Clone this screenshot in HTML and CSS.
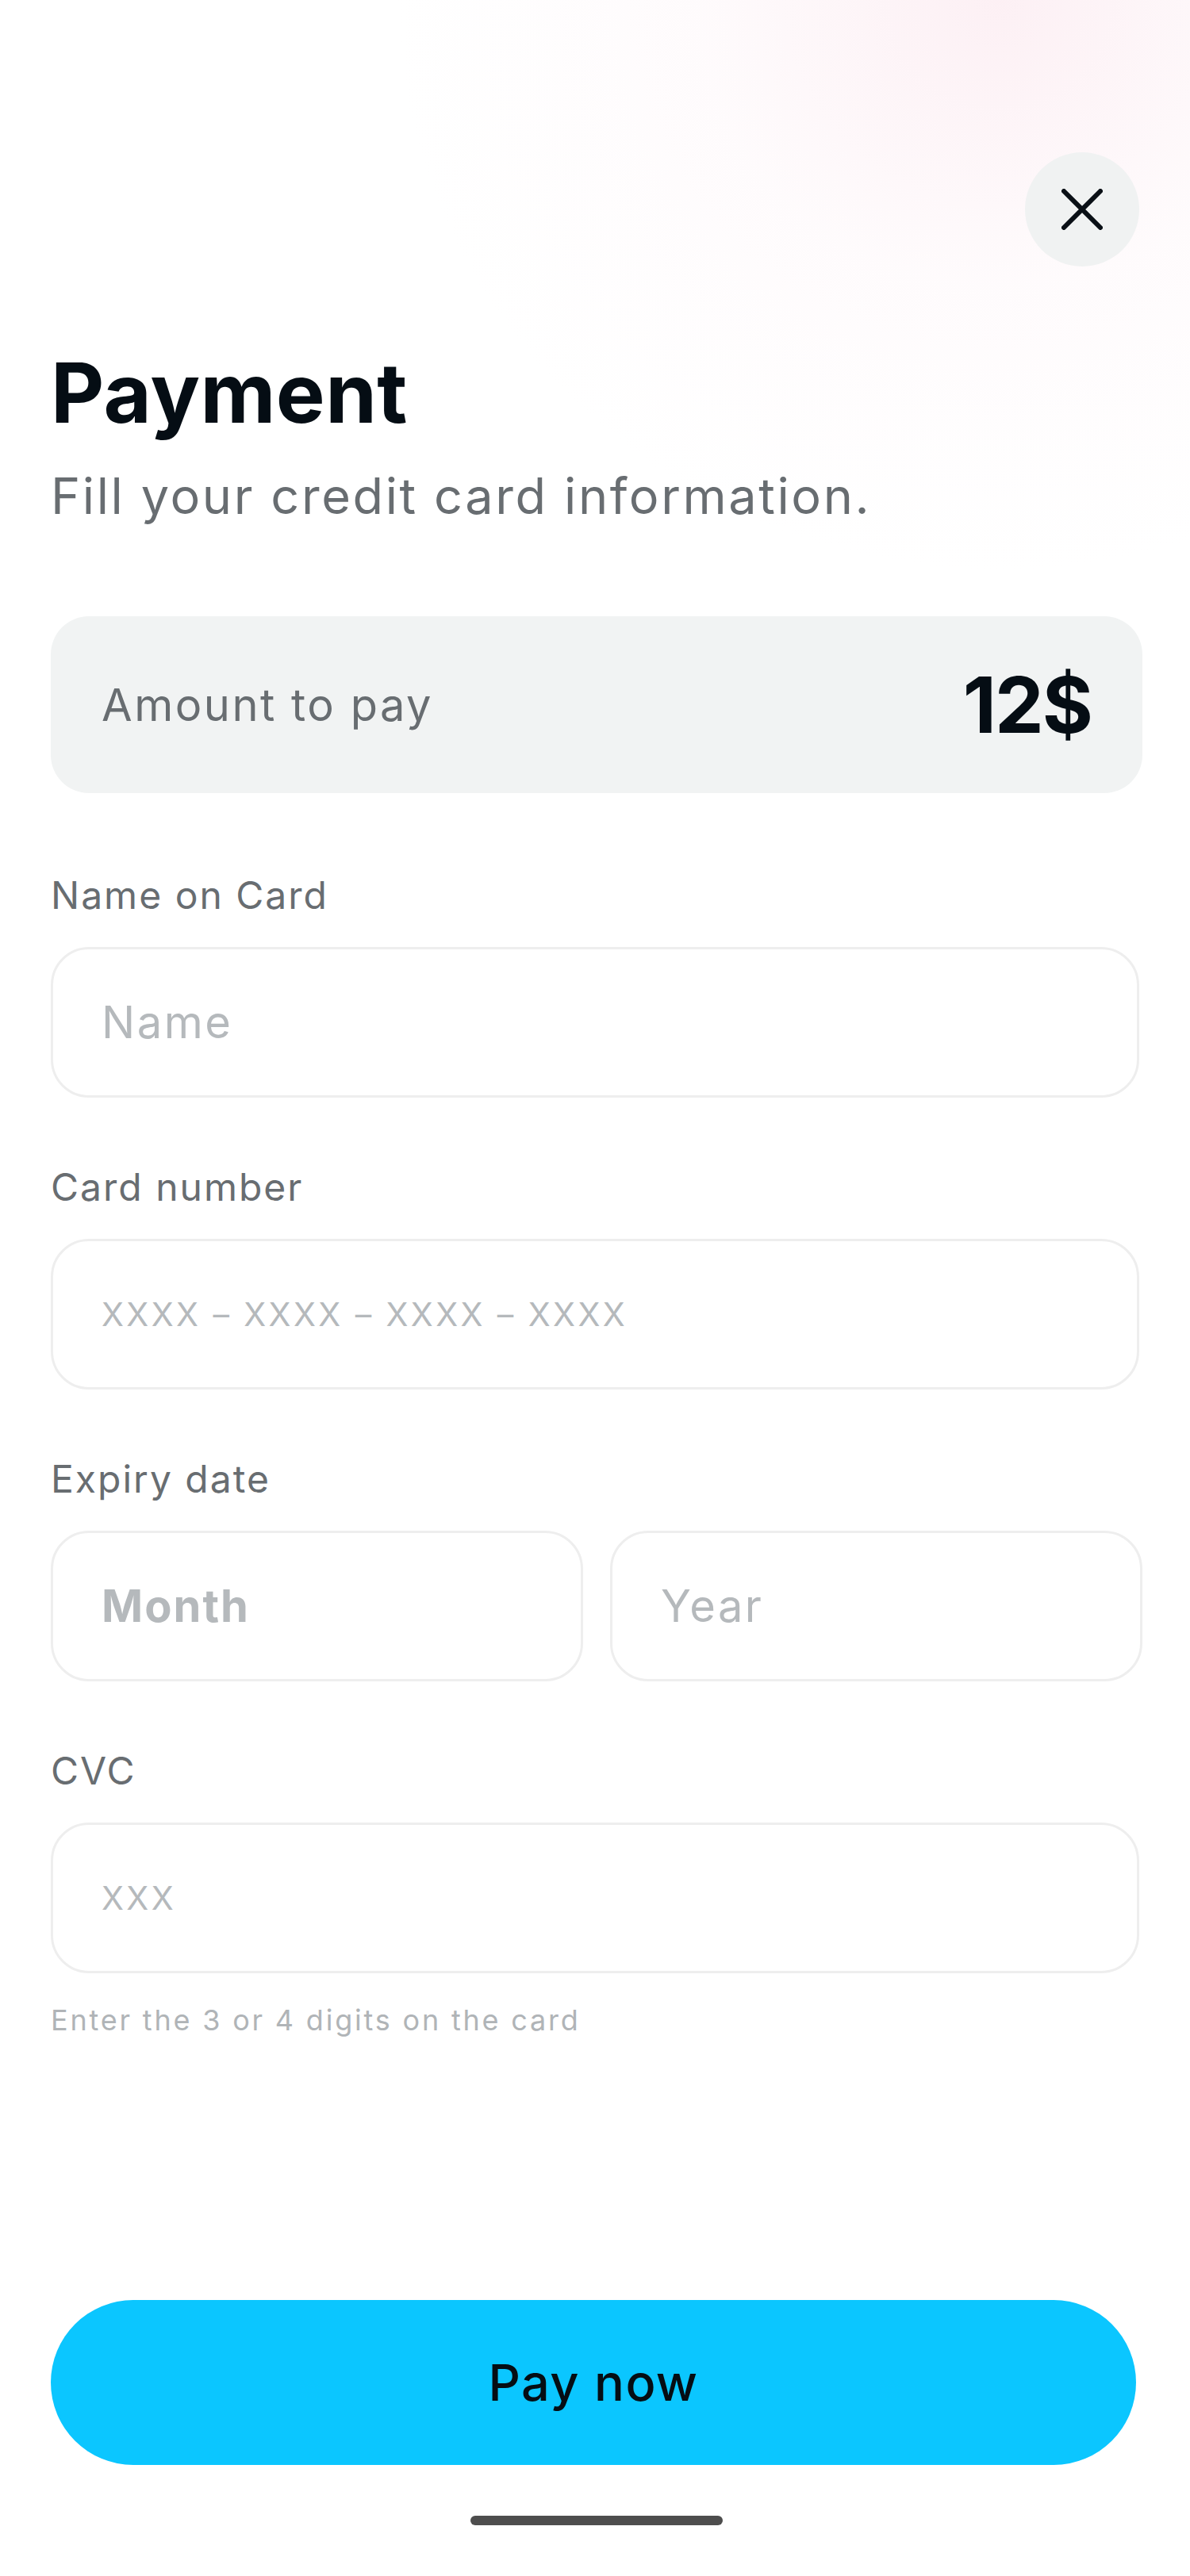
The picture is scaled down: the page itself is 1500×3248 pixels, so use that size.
FILE: index.html
```html
<!DOCTYPE html>
<html lang="en">
<head>
<meta charset="utf-8">
<title>Payment</title>
<link rel="stylesheet" href="styles.css">
</head>
<body>
<div class="screen">
  <div class="top">
    <button class="close" aria-label="Close">
      <svg width="52" height="52" viewBox="0 0 52 52"><path d="M3 3 L49 49 M49 3 L3 49" stroke="#0a1016" stroke-width="6" stroke-linecap="round" fill="none"/></svg>
    </button>
  </div>
  <h1 class="title">Payment</h1>
  <p class="subtitle">Fill your credit card information.</p>

  <div class="amount">
    <span class="amount-label">Amount to pay</span>
    <span class="amount-value">12$</span>
  </div>

  <div class="label first">Name on Card</div>
  <div class="input narrow"><span class="ph">Name</span></div>

  <div class="label">Card number</div>
  <div class="input narrow"><span class="ph small">XXXX – XXXX – XXXX – XXXX</span></div>

  <div class="label">Expiry date</div>
  <div class="row">
    <div class="input"><span class="ph month">Month</span></div>
    <div class="input"><span class="ph">Year</span></div>
  </div>

  <div class="label">CVC</div>
  <div class="input narrow"><span class="ph small">XXX</span></div>
  <div class="helper">Enter the 3 or 4 digits on the card</div>

  <div class="footer">
    <button class="pay">Pay now</button>
    <div class="home-bar"></div>
  </div>
</div>
</body>
</html>
```

FILE: styles.css
```css
html, body {
  margin: 0;
  padding: 0;
}
body {
  width: 1500px;
  background: #ffffff;
  font-family: Inter, "Noto Sans", "Liberation Sans", sans-serif;
}
.screen {
  height: 3248px;
  box-sizing: border-box;
  padding: 192px 60px 0 64px;
  display: flex;
  flex-direction: column;
  background:
    radial-gradient(ellipse 760px 720px at 1260px 0px, rgba(251, 230, 237, 0.6) 0%, rgba(253, 242, 246, 0.3) 50%, rgba(255, 255, 255, 0) 100%),
    #ffffff;
}
.top {
  display: flex;
  justify-content: flex-end;
  margin-right: 4px;
}
.close {
  width: 144px;
  height: 144px;
  border-radius: 50%;
  border: 0;
  padding: 0;
  background: #f0f2f2;
  display: flex;
  align-items: center;
  justify-content: center;
}
.title {
  margin: 107px 0 0;
  font-size: 104px;
  line-height: 104px;
  font-weight: 700;
  color: #050d14;
  letter-spacing: 0.4px;
}
.subtitle {
  margin: 47px 0 0;
  font-size: 63px;
  line-height: 63px;
  font-weight: 400;
  color: #686d71;
  letter-spacing: 2.6px;
}
.amount {
  margin-top: 120px;
  height: 223px;
  box-sizing: border-box;
  border-radius: 48px;
  background: #f1f3f3;
  display: flex;
  align-items: center;
  justify-content: space-between;
  padding: 0 64px 0 64px;
}
.amount-label {
  font-size: 56px;
  color: #686d71;
  letter-spacing: 2.5px;
}
.amount-value {
  font-size: 98px;
  font-weight: 700;
  color: #050d14;
  letter-spacing: -2px;
}
.label {
  margin-top: 89px;
  font-size: 48px;
  line-height: 48px;
  color: #686d71;
  letter-spacing: 2px;
}
.label.first {
  margin-top: 105px;
}
.input {
  margin-top: 41px;
  height: 190px;
  box-sizing: border-box;
  border: 3px solid #eeeeee;
  border-radius: 48px;
  background: #ffffff;
  display: flex;
  align-items: center;
  padding-left: 61px;
}
.input.narrow {
  margin-right: 4px;
}
.row {
  display: grid;
  grid-template-columns: 1fr 1fr;
  column-gap: 34px;
}
.ph {
  font-size: 56px;
  color: #b5b9bc;
  letter-spacing: 2.5px;
}
.ph.month {
  font-weight: 700;
  letter-spacing: 2px;
}
.ph.small {
  font-size: 41px;
  letter-spacing: 3.4px;
}
.helper {
  margin-top: 41px;
  font-size: 36px;
  line-height: 36px;
  color: #b0b4b7;
  letter-spacing: 2.8px;
}
.footer {
  margin-top: auto;
  display: flex;
  flex-direction: column;
  align-items: center;
}
.pay {
  align-self: stretch;
  margin-right: 8px;
  height: 208px;
  border: 0;
  border-radius: 104px;
  background: #0bc6ff;
  font-family: Inter, "Noto Sans", "Liberation Sans", sans-serif;
  font-size: 63px;
  font-weight: 500;
  color: #050d14;
  letter-spacing: 1.4px;
}
.home-bar {
  margin: 64px 0 64px;
  width: 318px;
  height: 12px;
  border-radius: 6px;
  background: #4d4d4d;
}
```
